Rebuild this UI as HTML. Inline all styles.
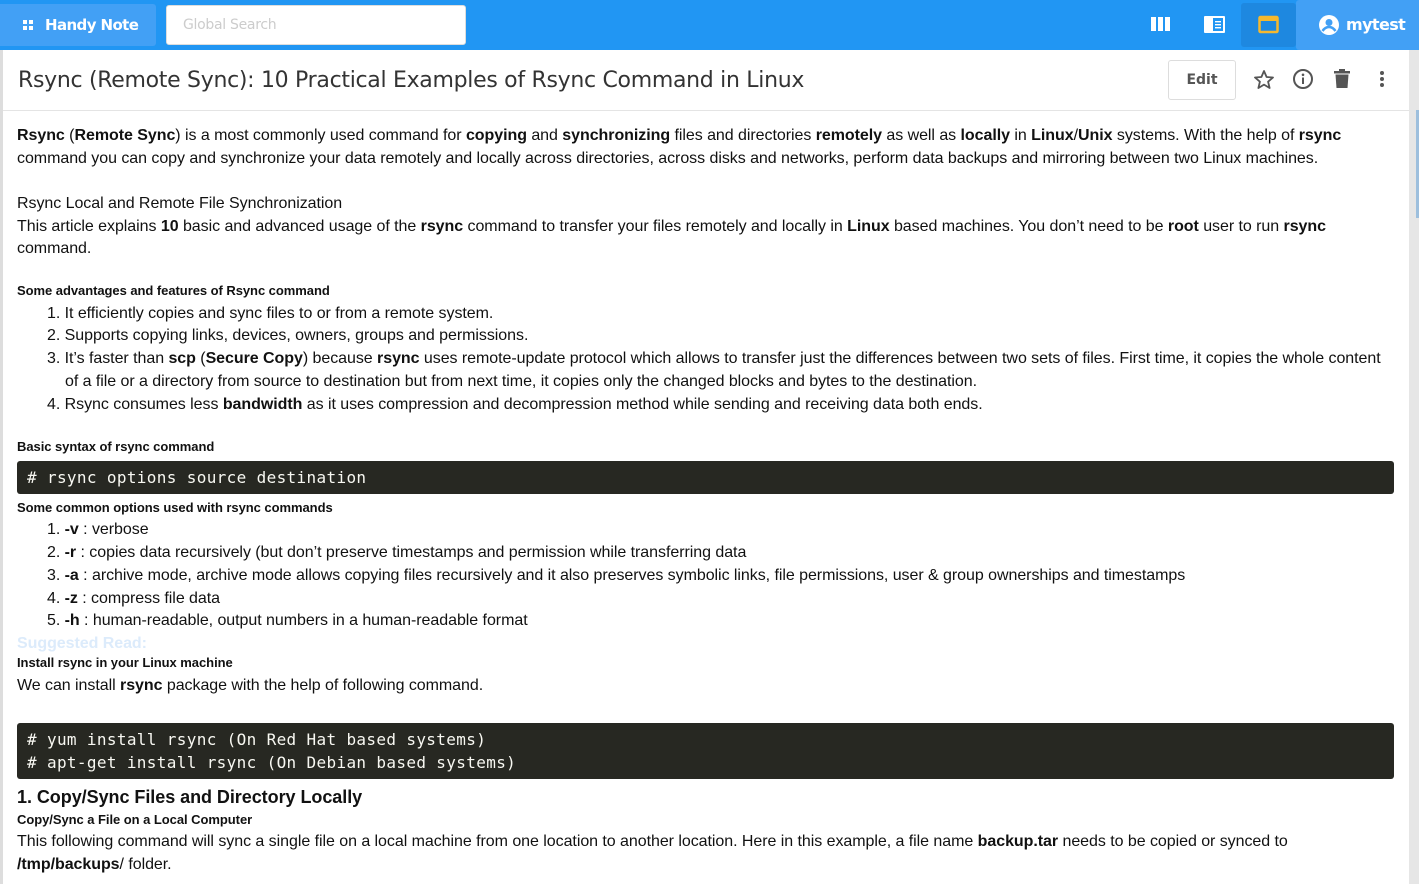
<!DOCTYPE html>
<html><head><meta charset="utf-8"><style>
*{margin:0;padding:0;box-sizing:border-box}
body{width:1419px;height:884px;overflow:hidden;background:#fff;font-family:"Liberation Sans",Arial,sans-serif;color:#111;position:relative}
.top{position:absolute;left:0;top:0;width:1419px;height:50px;background:#2196f3}
.brand{position:absolute;left:0;top:4px;width:156px;height:42px;background:#42a0f5;border-radius:0 3px 3px 0;color:#fff;font-family:"DejaVu Sans",sans-serif;font-size:15px;font-weight:bold;line-height:42px;padding-left:45px;letter-spacing:-0.6px}
.search{position:absolute;left:166px;top:5px;width:300px;height:40px;background:#fff;border:1px solid #ddd;border-radius:3px;color:#ccc;font-size:14px;line-height:38px;padding-left:16px;font-family:"DejaVu Sans",sans-serif;letter-spacing:-0.3px}
.user{position:absolute;left:1296px;top:0;width:123px;height:50px;background:#42a0f5;border-radius:3px 0 0 3px;color:#fff;font-family:"DejaVu Sans",sans-serif;font-size:16px;font-weight:bold;line-height:50px;padding-left:50px;letter-spacing:-0.6px}
.hdr{position:absolute;left:3px;top:50px;width:1406px;height:61px;border-bottom:1px solid #e4e4e4}
.title{position:absolute;left:18px;top:64px;font-family:"DejaVu Sans",sans-serif;font-size:22px;color:#333;line-height:34px;letter-spacing:-0.3px}
.edit{position:absolute;left:1168px;top:60px;width:68px;height:40px;border:1px solid #ddd;border-radius:3px;color:#555;font-size:14px;font-weight:bold;text-align:center;line-height:38px;font-family:"DejaVu Sans",sans-serif}
.l{position:absolute;left:17px;font-size:16px;line-height:23px;white-space:nowrap;letter-spacing:-0.05px}
.li{left:47px}
.sm{font-size:13px;font-weight:bold;line-height:18px}
.code{position:absolute;left:17px;width:1377px;background:#272822;border-radius:3px;color:#f8f8f2;font-family:"DejaVu Sans Mono",monospace;font-size:16px;line-height:23px;padding:5px 10px;white-space:pre;letter-spacing:0.35px}
</style></head><body>
<div style="position:absolute;left:0;top:50px;width:3px;height:834px;background:#ddd"></div>
<div style="position:absolute;left:1409px;top:50px;width:10px;height:834px;background:#e6e6e6"></div>
<div style="position:absolute;left:1416px;top:110px;width:3px;height:108px;background:#9dbfdd"></div>
<div class="top"></div>
<div class="brand">Handy Note</div>
<svg style="position:absolute;left:23px;top:20px" width="11" height="11"><rect x="0" y="0" width="4" height="4" fill="#fff"/><rect x="6" y="0" width="4" height="4" fill="#fff"/><rect x="0" y="6" width="4" height="4" fill="#fff"/><rect x="6" y="6" width="4" height="4" fill="#fff"/></svg>
<div class="search">Global Search</div>
<svg style="position:absolute;left:1151px;top:16px" width="20" height="16"><rect x="0" y="1" width="5" height="14" fill="#fff"/><rect x="7" y="1" width="5" height="14" fill="#fff"/><rect x="14" y="1" width="5" height="14" fill="#fff"/></svg>
<svg style="position:absolute;left:1203px;top:15px" width="24" height="19"><rect x="1" y="1" width="21" height="17" rx="1" fill="#fff"/><rect x="10" y="3" width="10" height="13" fill="#2196f3"/><rect x="12" y="6" width="6" height="1.4" fill="#fff"/><rect x="12" y="9" width="6" height="1.4" fill="#fff"/><rect x="12" y="12" width="6" height="1.4" fill="#fff"/></svg>
<div style="position:absolute;left:1241px;top:3px;width:55px;height:44px;background:#1e88e0;border-radius:3px"></div>
<svg style="position:absolute;left:1258px;top:15px" width="22" height="19"><rect x="1.5" y="2" width="18" height="15" rx="1" fill="none" stroke="#f5b82e" stroke-width="2.5"/><rect x="1.5" y="2" width="18" height="4" fill="#f5b82e"/></svg>
<div class="user">mytest</div>
<svg style="position:absolute;left:1318px;top:14px" width="22" height="22"><circle cx="11" cy="11" r="10" fill="#fff"/><circle cx="11" cy="8.5" r="3.5" fill="#42a0f5"/><path d="M4.5 17c2-3 4-4 6.5-4s4.5 1 6.5 4" stroke="#42a0f5" stroke-width="2.5" fill="none"/></svg>
<div class="hdr"></div>
<div class="title">Rsync (Remote Sync): 10 Practical Examples of Rsync Command in Linux</div>
<div class="edit">Edit</div>
<svg style="position:absolute;left:1253px;top:69px" width="22" height="21"><path d="M11 2l2.6 6 6.4.5-4.9 4.2 1.5 6.3L11 15.6 5.4 19l1.5-6.3L2 8.5l6.4-.5z" fill="none" stroke="#555" stroke-width="1.8" stroke-linejoin="round"/></svg>
<svg style="position:absolute;left:1292px;top:68px" width="22" height="22"><circle cx="11" cy="11" r="9" fill="none" stroke="#555" stroke-width="2"/><rect x="10" y="9.5" width="2" height="6.5" fill="#555"/><circle cx="11" cy="6.8" r="1.3" fill="#555"/></svg>
<svg style="position:absolute;left:1333px;top:69px" width="18" height="20"><rect x="1" y="2" width="16" height="2.5" fill="#555"/><rect x="6" y="0" width="6" height="3" fill="#555"/><path d="M2.5 5.5h13l-1 13.5h-11z" fill="#555"/></svg>
<svg style="position:absolute;left:1378px;top:70px" width="8" height="18"><circle cx="4" cy="3" r="2" fill="#555"/><circle cx="4" cy="9" r="2" fill="#555"/><circle cx="4" cy="15" r="2" fill="#555"/></svg>

<div class="l" style="top:124px"><b>Rsync</b> (<b>Remote Sync</b>) is a most commonly used command for <b>copying</b> and <b>synchronizing</b> files and directories <b>remotely</b> as well as <b>locally</b> in <b>Linux</b>/<b>Unix</b> systems. With the help of <b>rsync</b></div>
<div class="l" style="top:147px">command you can copy and synchronize your data remotely and locally across directories, across disks and networks, perform data backups and mirroring between two Linux machines.</div>
<div class="l" style="top:192px">Rsync Local and Remote File Synchronization</div>
<div class="l" style="top:215px">This article explains <b>10</b> basic and advanced usage of the <b>rsync</b> command to transfer your files remotely and locally in <b>Linux</b> based machines. You don’t need to be <b>root</b> user to run <b>rsync</b></div>
<div class="l" style="top:237px">command.</div>
<div class="l sm" style="top:282px">Some advantages and features of Rsync command</div>
<div class="l li" style="top:302px">1. It efficiently copies and sync files to or from a remote system.</div>
<div class="l li" style="top:324px">2. Supports copying links, devices, owners, groups and permissions.</div>
<div class="l li" style="top:347px">3. It’s faster than <b>scp</b> (<b>Secure Copy</b>) because <b>rsync</b> uses remote-update protocol which allows to transfer just the differences between two sets of files. First time, it copies the whole content</div>
<div class="l" style="top:370px;left:65px">of a file or a directory from source to destination but from next time, it copies only the changed blocks and bytes to the destination.</div>
<div class="l li" style="top:393px">4. Rsync consumes less <b>bandwidth</b> as it uses compression and decompression method while sending and receiving data both ends.</div>
<div class="l sm" style="top:438px">Basic syntax of rsync command</div>
<div class="code" style="top:461px;height:33px"># rsync options source destination</div>
<div class="l sm" style="top:499px">Some common options used with rsync commands</div>
<div class="l li" style="top:518px">1. <b>-v</b> : verbose</div>
<div class="l li" style="top:541px">2. <b>-r</b> : copies data recursively (but don’t preserve timestamps and permission while transferring data</div>
<div class="l li" style="top:564px">3. <b>-a</b> : archive mode, archive mode allows copying files recursively and it also preserves symbolic links, file permissions, user &amp; group ownerships and timestamps</div>
<div class="l li" style="top:587px">4. <b>-z</b> : compress file data</div>
<div class="l li" style="top:609px">5. <b>-h</b> : human-readable, output numbers in a human-readable format</div>
<div class="l" style="top:632px;color:#dcebfb;font-weight:bold">Suggested Read:</div>
<div class="l sm" style="top:654px">Install rsync in your Linux machine</div>
<div class="l" style="top:674px">We can install <b>rsync</b> package with the help of following command.</div>
<div class="code" style="top:723px;height:56px"># yum install rsync (On Red Hat based systems)
# apt-get install rsync (On Debian based systems)</div>
<div class="l" style="top:785px;font-size:18px;font-weight:bold;line-height:24px">1. Copy/Sync Files and Directory Locally</div>
<div class="l sm" style="top:811px">Copy/Sync a File on a Local Computer</div>
<div class="l" style="top:830px">This following command will sync a single file on a local machine from one location to another location. Here in this example, a file name <b>backup.tar</b> needs to be copied or synced to</div>
<div class="l" style="top:853px"><b>/tmp/backups</b>/ folder.</div>
</body></html>
